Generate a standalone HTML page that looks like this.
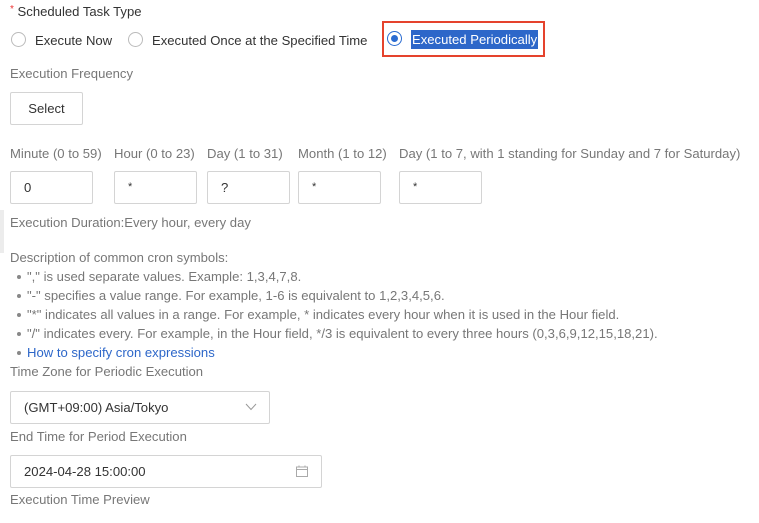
<!DOCTYPE html>
<html><head><meta charset="utf-8"><style>
body{margin:0;width:759px;height:523px;background:#fff;font-family:"Liberation Sans",sans-serif;font-size:13.1px;color:#333;position:relative;overflow:hidden}
.a{position:absolute;white-space:nowrap}
.g{color:#777}
.box{position:absolute;border:1px solid #d4d4d4;border-radius:2px;box-sizing:border-box;background:#fff}
.r{position:absolute;width:15px;height:15px;border:1px solid #bbb;border-radius:50%;box-sizing:border-box;top:32px}
.li{position:absolute;left:27px;white-space:nowrap;color:#777}
.li:before{content:"";position:absolute;left:-10px;top:6px;width:4px;height:4px;border-radius:50%;background:#888}
</style></head><body>
<div class="a" style="left:10px;top:4px;color:#333"><span style="color:#e33;font-size:10px;vertical-align:top">*</span> Scheduled Task Type</div>
<div class="r" style="left:11px"></div>
<div class="a" style="left:35px;top:33px">Execute Now</div>
<div class="r" style="left:128px"></div>
<div class="a" style="left:152px;top:33px">Executed Once at the Specified Time</div>
<div style="position:absolute;left:382px;top:21px;width:163px;height:36px;border:2px solid #e5432d;box-sizing:border-box"></div>
<div style="position:absolute;left:387px;top:31px;width:15px;height:15px;border:1px solid #2a6bd1;border-radius:50%;box-sizing:border-box"><div style="position:absolute;left:3px;top:3px;width:7px;height:7px;border-radius:50%;background:#2a6bd1"></div></div>
<div class="a" style="left:411px;top:30px;height:19px;line-height:19px;background:#2d67c9;color:#fff;padding:0 1px">Executed Periodically</div>
<div class="a g" style="left:10px;top:66px">Execution Frequency</div>
<div class="box" style="left:10px;top:92px;width:73px;height:33px;text-align:center;line-height:31px;color:#333">Select</div>
<div class="a g" style="left:10px;top:146px">Minute (0 to 59)</div>
<div class="a g" style="left:114px;top:146px">Hour (0 to 23)</div>
<div class="a g" style="left:207px;top:146px">Day (1 to 31)</div>
<div class="a g" style="left:298px;top:146px">Month (1 to 12)</div>
<div class="a g" style="left:399px;top:146px">Day (1 to 7, with 1 standing for Sunday and 7 for Saturday)</div>
<div class="box" style="left:10px;top:171px;width:83px;height:33px;line-height:31px;padding-left:13px">0</div>
<div class="box" style="left:114px;top:171px;width:83px;height:33px;line-height:31px;padding-left:13px;font-size:11px">*</div>
<div class="box" style="left:207px;top:171px;width:83px;height:33px;line-height:31px;padding-left:13px">?</div>
<div class="box" style="left:298px;top:171px;width:83px;height:33px;line-height:31px;padding-left:13px;font-size:11px">*</div>
<div class="box" style="left:399px;top:171px;width:83px;height:33px;line-height:31px;padding-left:13px;font-size:11px">*</div>
<div style="position:absolute;left:0;top:210px;width:4px;height:43px;background:#ececec"></div>
<div class="a g" style="left:10px;top:215px">Execution Duration:Every hour, every day</div>
<div class="a g" style="left:10px;top:250px">Description of common cron symbols:</div>
<div class="li" style="top:269px">"," is used separate values. Example: 1,3,4,7,8.</div>
<div class="li" style="top:288px">"-" specifies a value range. For example, 1-6 is equivalent to 1,2,3,4,5,6.</div>
<div class="li" style="top:307px">"*" indicates all values in a range. For example, * indicates every hour when it is used in the Hour field.</div>
<div class="li" style="top:326px">"/" indicates every. For example, in the Hour field, */3 is equivalent to every three hours (0,3,6,9,12,15,18,21).</div>
<div class="li" style="top:345px;color:#2d67c9">How to specify cron expressions</div>
<div class="a g" style="left:10px;top:364px">Time Zone for Periodic Execution</div>
<div class="box" style="left:10px;top:391px;width:260px;height:33px;line-height:31px;padding-left:13px">(GMT+09:00) Asia/Tokyo
<svg style="position:absolute;right:12px;top:11px" width="12" height="8" viewBox="0 0 12 8"><path d="M1 1L6 6.5L11 1" fill="none" stroke="#999" stroke-width="1"/></svg></div>
<div class="a g" style="left:10px;top:429px">End Time for Period Execution</div>
<div class="box" style="left:10px;top:455px;width:312px;height:33px;line-height:31px;padding-left:13px">2024-04-28 15:00:00
<svg style="position:absolute;right:13px;top:9px" width="12" height="12" viewBox="0 0 12 12"><rect x="0.5" y="2" width="11" height="9.5" fill="none" stroke="#aaa"/><path d="M0.5 4.5H11.5M3 0.5V2.5M9 0.5V2.5" stroke="#aaa"/></svg></div>
<div class="a g" style="left:10px;top:492px">Execution Time Preview</div>
</body></html>
